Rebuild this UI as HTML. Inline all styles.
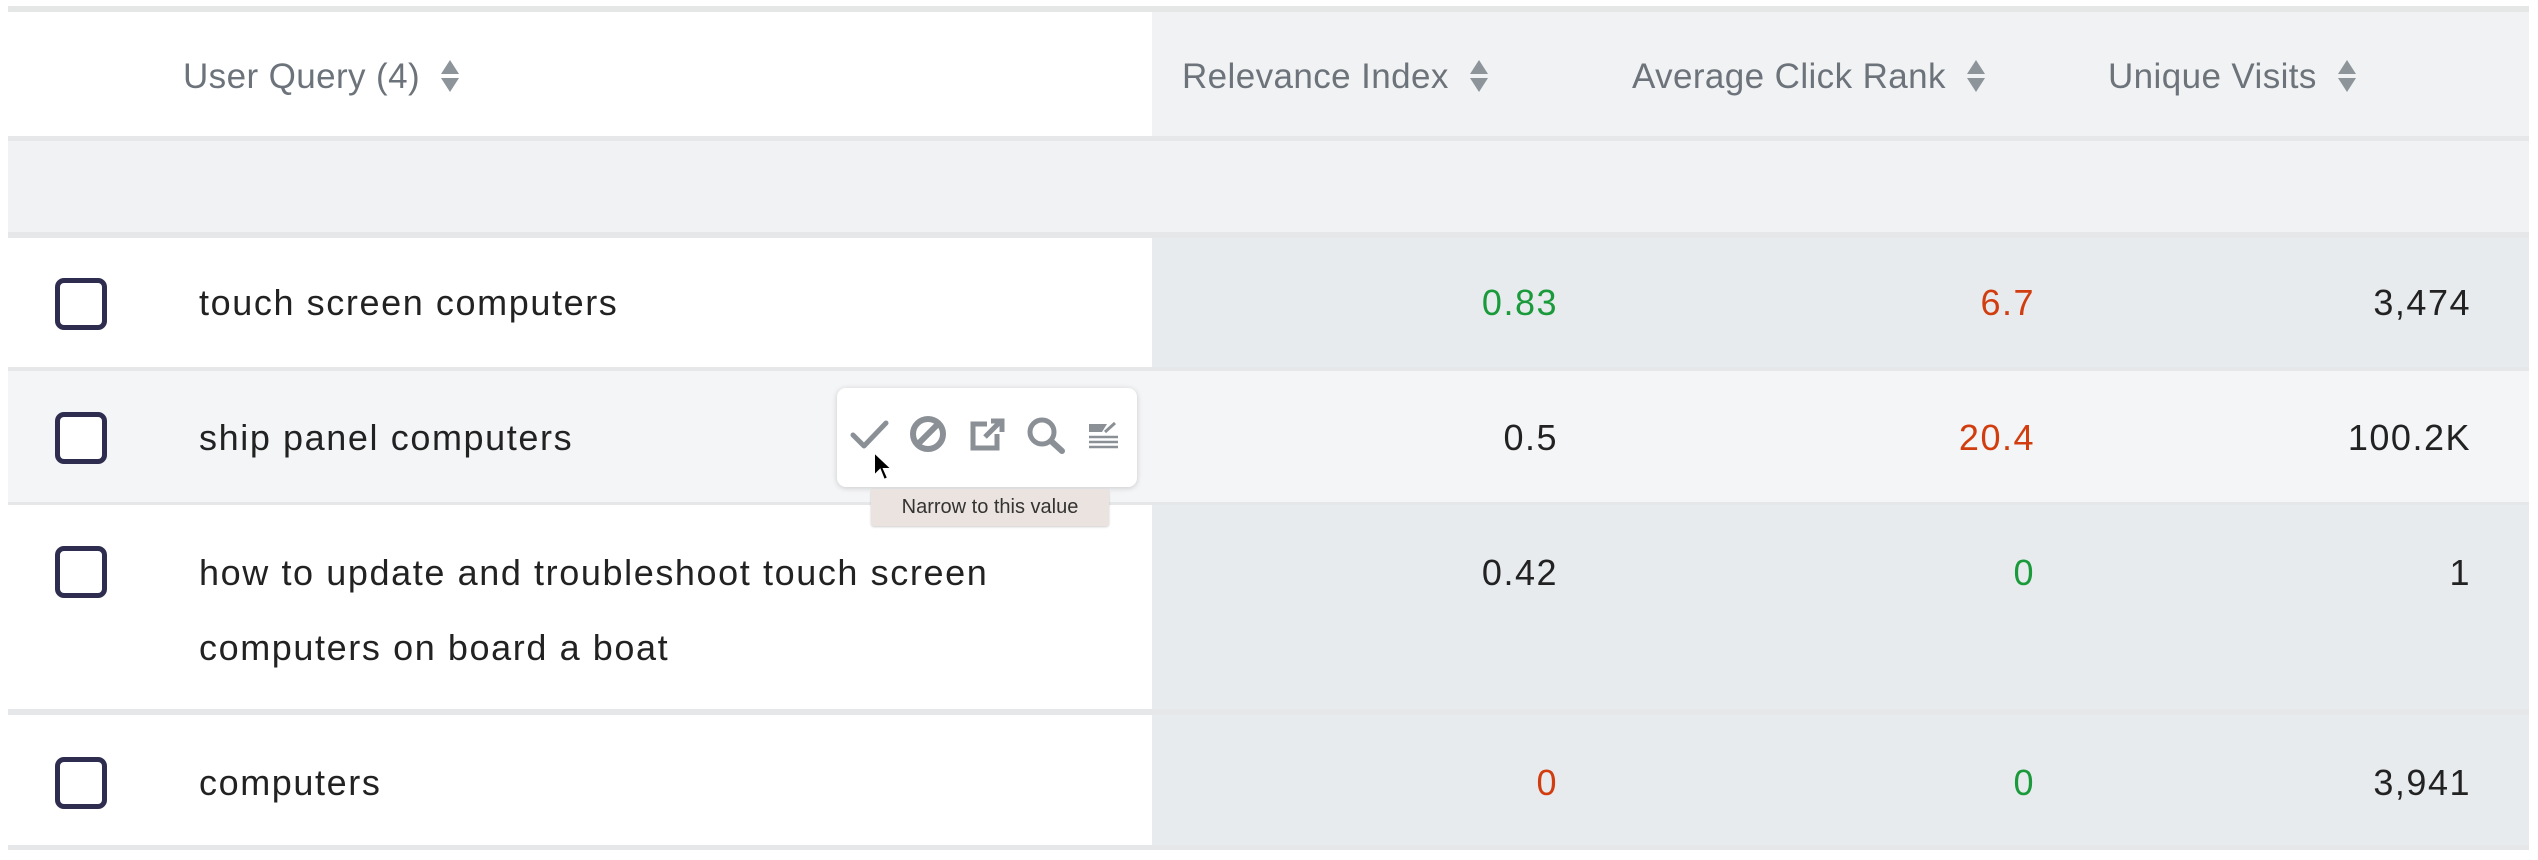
<!DOCTYPE html>
<html><head><meta charset="utf-8"><style>
*{margin:0;padding:0;box-sizing:border-box}
body{width:2538px;height:860px;background:#fff;position:relative;overflow:hidden;font-family:"Liberation Sans",sans-serif}
.a{position:absolute}
.h{color:#6c737a;font-size:35px;top:56px;line-height:42px;white-space:nowrap;letter-spacing:0.4px}
.t{color:#222;font-size:36px;left:199px;white-space:nowrap;letter-spacing:1.6px}
.n{font-size:36px;text-align:right;white-space:nowrap;width:300px;letter-spacing:1.5px}
.cb{left:55px;width:52px;height:52px;border:5px solid #2e2d4f;border-radius:9px;background:#fff}
.g{color:#1a9a3a}.r{color:#d13d0e}.k{color:#222}
.sort{display:inline-block;vertical-align:middle;margin-left:20px;width:20px;height:34px;position:relative;top:-3px}
</style></head><body>
<div class="a" style="left:8px;top:6px;width:2521px;height:6px;background:#e5e7e6"></div>
<div class="a" style="left:1152px;top:12px;width:1377px;height:125px;background:#f1f2f3"></div>
<div class="a" style="left:8px;top:136px;width:2521px;height:5px;background:#e6e7e8"></div>
<div class="a" style="left:8px;top:141px;width:2521px;height:91px;background:#f1f2f3"></div>
<div class="a" style="left:8px;top:232px;width:2521px;height:6px;background:#e6e7e8"></div>
<div class="a" style="left:1152px;top:238px;width:1377px;height:129px;background:#e7ebee"></div>
<div class="a" style="left:8px;top:367px;width:2521px;height:4px;background:#e6e7e8"></div>
<div class="a" style="left:8px;top:371px;width:2521px;height:131px;background:#f4f5f7"></div>
<div class="a" style="left:8px;top:502px;width:2521px;height:3px;background:#e6e7e8"></div>
<div class="a" style="left:1152px;top:505px;width:1377px;height:204px;background:#e7ebee"></div>
<div class="a" style="left:8px;top:709px;width:2521px;height:6px;background:#e6e7e8"></div>
<div class="a" style="left:1152px;top:715px;width:1377px;height:130px;background:#e7ebee"></div>
<div class="a" style="left:8px;top:845px;width:2521px;height:5px;background:#e6e7e8"></div>

<svg width="0" height="0" style="position:absolute"><defs><g id="s"><path d="M10 1 L19 15 L1 15Z" fill="#8d949a"/><path d="M10 33 L19 19 L1 19Z" fill="#8d949a"/></g></defs></svg>
<div class="a h" style="left:183px">User Query (4)<svg class="sort" viewBox="0 0 20 34"><use href="#s"/></svg></div>
<div class="a h" style="left:1182px">Relevance Index<svg class="sort" viewBox="0 0 20 34"><use href="#s"/></svg></div>
<div class="a h" style="left:1632px">Average Click Rank<svg class="sort" viewBox="0 0 20 34"><use href="#s"/></svg></div>
<div class="a h" style="left:2108px">Unique Visits<svg class="sort" viewBox="0 0 20 34"><use href="#s"/></svg></div>

<div class="a cb" style="top:278px"></div>
<div class="a t" style="top:282px">touch screen computers</div>
<div class="a n g" style="left:1258px;top:282px">0.83</div>
<div class="a n r" style="left:1735px;top:282px">6.7</div>
<div class="a n k" style="left:2171px;top:282px">3,474</div>

<div class="a cb" style="top:412px"></div>
<div class="a t" style="top:417px">ship panel computers</div>
<div class="a n k" style="left:1258px;top:417px">0.5</div>
<div class="a n r" style="left:1735px;top:417px">20.4</div>
<div class="a n k" style="left:2171px;top:417px">100.2K</div>

<div class="a cb" style="top:546px"></div>
<div class="a t" style="top:535px;line-height:75px">how to update and troubleshoot touch screen<br>computers on board a boat</div>
<div class="a n k" style="left:1258px;top:552px">0.42</div>
<div class="a n g" style="left:1735px;top:552px">0</div>
<div class="a n k" style="left:2171px;top:552px">1</div>

<div class="a cb" style="top:757px"></div>
<div class="a t" style="top:762px">computers</div>
<div class="a n r" style="left:1258px;top:762px">0</div>
<div class="a n g" style="left:1735px;top:762px">0</div>
<div class="a n k" style="left:2171px;top:762px">3,941</div>

<div class="a" style="left:837px;top:388px;width:300px;height:99px;background:#fff;border-radius:9px;box-shadow:0 1px 6px rgba(0,0,0,.18)"></div>
<svg class="a" style="left:837px;top:388px" width="300" height="99" viewBox="0 0 300 99" fill="none" stroke="#8a9096">
<path d="M16 47 L27 58 L49 35" stroke-width="5" stroke-linecap="round" stroke-linejoin="round"/>
<circle cx="91" cy="46" r="15" stroke-width="6"/><path d="M81 56 L101 36" stroke-width="6"/>
<path d="M150 36 H136 V60 H160 V46" stroke-width="5"/><path d="M148 49 L163 34 M154 33 H165 V44" stroke-width="5"/>
<circle cx="205" cy="44" r="12" stroke-width="5"/><path d="M214 53 L225 63" stroke-width="6" stroke-linecap="round"/>
<path d="M252 36 H270 L265 44 H252Z" fill="#8a9096" stroke="none"/><path d="M268 44 L278 35" stroke-width="3"/>
<path d="M252 49 H281 M252 54 H281 M252 59 H281" stroke-width="2.5"/>
</svg>
<svg class="a" style="left:872px;top:450px" width="24" height="34" viewBox="0 0 24 34"><path d="M2 2 L2 26 L8 20 L12 30 L16 28 L12 19 L20 19Z" fill="#000" stroke="#fff" stroke-width="2"/></svg>
<div class="a" style="left:871px;top:489px;width:238px;height:37px;background:#ebe3df;border-radius:3px;box-shadow:0 1px 2px rgba(0,0,0,.2);font-size:20px;color:#333;line-height:37px;text-align:center">Narrow to this value</div>
</body></html>
